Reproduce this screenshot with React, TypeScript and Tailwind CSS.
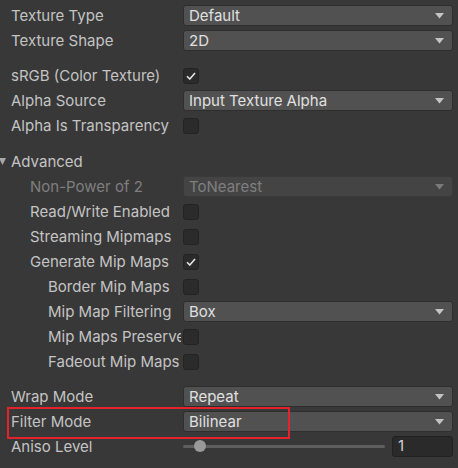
import * as React from "react"

function Arrow({ dim }: { dim?: boolean }) {
  return (
    <svg width="9" height="6" viewBox="0 0 9 6" className="shrink-0">
      <path d="M0 0 H9 L4.5 5.5 Z" fill={dim ? "#7a7a7a" : "#c4c4c4"} />
    </svg>
  )
}

function Dropdown({ value, disabled }: { value: string; disabled?: boolean }) {
  return (
    <div
      className={
        disabled
          ? "flex h-[21px] items-center justify-between rounded-[3px] border border-[#3a3a3a] bg-[#444444] pl-[5px] pr-[8px] text-[#7f7f7f]"
          : "flex h-[21px] items-center justify-between rounded-[3px] border border-[#2e2e2e] bg-[#515151] pl-[5px] pr-[8px] text-[#e0e0e0]"
      }
    >
      <span className="leading-none">{value}</span>
      <Arrow dim={disabled} />
    </div>
  )
}

function Checkbox({ checked }: { checked?: boolean }) {
  return (
    <div className="flex size-[16px] items-center justify-center rounded-[3px] border border-[#232323] bg-[#2b2b2b]">
      {checked && (
        <svg width="10" height="8" viewBox="0 0 10 8">
          <path
            d="M1 4.2 L3.8 7 L9 1"
            fill="none"
            stroke="#e6e6e6"
            strokeWidth="1.6"
          />
        </svg>
      )}
    </div>
  )
}

function Row({
  label,
  indent = 0,
  disabled,
  children,
  className,
}: {
  label: string
  indent?: 0 | 1 | 2
  disabled?: boolean
  children?: React.ReactNode
  className?: string
}) {
  const pad = indent === 2 ? "pl-[48px]" : indent === 1 ? "pl-[30px]" : "pl-[11px]"
  return (
    <div className={"flex h-[25px] items-center " + (className ?? "")}>
      <div
        className={
          "w-[181px] shrink-0 translate-y-[1px] overflow-hidden whitespace-nowrap " +
          pad +
          (disabled ? " text-[#7f7f7f]" : " text-[#c4c4c4]")
        }
      >
        {label}
      </div>
      <div className="ml-[2px] mr-[5px] flex-1">{children}</div>
    </div>
  )
}

export default function App() {
  return (
    <div className="h-[468px] w-[458px] overflow-hidden bg-[#383838] pt-[3px] font-['Inter','Noto_Sans',sans-serif] text-[15px]">
      <Row label="Texture Type">
        <Dropdown value="Default" />
      </Row>
      <Row label="Texture Shape">
        <Dropdown value="2D" />
      </Row>

      <div className="h-[10px]" />
      <Row label="sRGB (Color Texture)">
        <Checkbox checked />
      </Row>
      <Row label="Alpha Source">
        <Dropdown value="Input Texture Alpha" />
      </Row>
      <Row label="Alpha Is Transparency">
        <Checkbox />
      </Row>

      <div className="h-[11px]" />
      {/* Advanced foldout */}
      <div className="flex h-[25px] items-center">
        <svg width="7" height="8" viewBox="0 0 7 8" className="ml-[-1px] shrink-0">
          <path d="M0 0 H7 L3.5 7 Z" fill="#a8a8a8" />
        </svg>
        <span className="ml-[5px] translate-y-[1px] text-[#c4c4c4]">Advanced</span>
      </div>
      <Row label="Non-Power of 2" indent={1} disabled>
        <Dropdown value="ToNearest" disabled />
      </Row>
      <Row label="Read/Write Enabled" indent={1}>
        <Checkbox />
      </Row>
      <Row label="Streaming Mipmaps" indent={1}>
        <Checkbox />
      </Row>
      <Row label="Generate Mip Maps" indent={1}>
        <Checkbox checked />
      </Row>
      <Row label="Border Mip Maps" indent={2}>
        <Checkbox />
      </Row>
      <Row label="Mip Map Filtering" indent={2}>
        <Dropdown value="Box" />
      </Row>
      <Row label="Mip Maps Preserve Coverage" indent={2}>
        <Checkbox />
      </Row>
      <Row label="Fadeout Mip Maps" indent={2}>
        <Checkbox />
      </Row>

      <div className="h-[10px]" />
      <Row label="Wrap Mode">
        <Dropdown value="Repeat" />
      </Row>
      <Row label="Filter Mode" className="relative">
        <Dropdown value="Bilinear" />
        <div className="pointer-events-none absolute left-[7px] top-[-2px] h-[32px] w-[283px] border-2 border-[#e3232b]" />
      </Row>
      <Row label="Aniso Level">
        <div className="flex items-center">
          <div className="relative flex h-[21px] flex-1 items-center">
            <div className="h-[3px] w-full rounded-full bg-[#5e5e5e]" />
            <div className="absolute left-[11px] top-[4px] size-[12px] rounded-full bg-[#999999]" />
          </div>
          <div className="ml-[7px] flex h-[21px] w-[61px] items-center rounded-[3px] border border-[#212121] bg-[#2a2a2a] pl-[5px] text-[#d2d2d2]">
            1
          </div>
        </div>
      </Row>
    </div>
  )
}
